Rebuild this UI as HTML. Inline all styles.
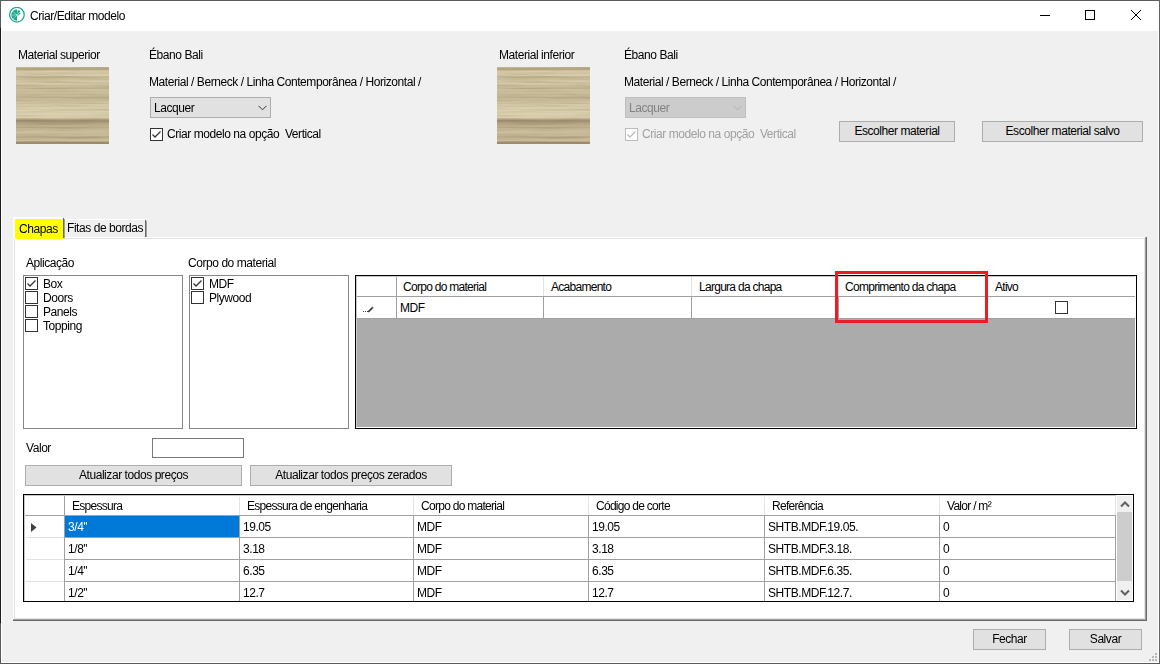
<!DOCTYPE html>
<html><head><meta charset="utf-8">
<style>
*{box-sizing:border-box;margin:0;padding:0}
html,body{width:1160px;height:664px;overflow:hidden;background:#f0f0f0;font-family:"Liberation Sans",sans-serif;font-size:11px;color:#000}
.a{position:absolute}
.t{position:absolute;white-space:nowrap;line-height:15px;font-size:12px;letter-spacing:-0.44px}
.btn{position:absolute;background:#e1e1e1;border:1px solid #adadad}
.btn span{position:absolute;left:0;right:0;text-align:center;white-space:nowrap;line-height:15px;font-size:12px;letter-spacing:-0.44px}
.cb{position:absolute;width:13px;height:13px;border:1px solid #333;background:#fff}
.cb svg{position:absolute;left:0;top:0}
.lb{position:absolute;border:1px solid #828790;background:#fff}
.hl{position:absolute;background:#a0a0a0;height:1px}
.vl{position:absolute;background:#a0a0a0;width:1px}
.hvl{position:absolute;background:#e3e3e3;width:1px}
.wood{position:absolute;width:93px;height:77px;background:repeating-linear-gradient(180deg,rgba(80,60,30,0.05) 0px,rgba(80,60,30,0) 1px,rgba(255,255,240,0.05) 2px,rgba(80,60,30,0) 3px),linear-gradient(180deg,#c9bd9a 0px,#c0b290 1px,#b3a37f 1.6px,#b8a985 2.6px,#cfc4a2 3.4px,#d8cdab 5px,#d6cba9 8.5px,#c8bc99 9.5px,#cbbf9c 12px,#cec3a1 13px,#d6cba9 16px,#cdc19e 18px,#c7bb98 19px,#cbbf9c 24px,#c3b693 30px,#c6b996 33px,#cdc19f 35px,#d3c8a6 38px,#dad0ae 44px,#d8ceac 51px,#b9a985 52.2px,#9e8e6b 53.2px,#a5957a 55px,#b0a07d 56px,#bbac89 58px,#c2b491 62px,#cbbf9d 64px,#c6b996 68px,#c2b492 69px,#b7a886 70.5px,#c4b795 72px,#cdc1a0 73px,#c4b694 74px,#a89977 75px,#9a8a69 76px,#9a8a69 77px)}
</style></head><body>
<!-- window frame -->
<div class="a" style="left:0;top:0;width:1160px;height:1px;background:#5a5a5a"></div>
<div class="a" style="left:0;top:0;width:1px;height:28px;background:#5a5a5a"></div>
<div class="a" style="left:0;top:28px;width:1px;height:595px;background:#1c1c1c"></div>
<div class="a" style="left:0;top:623px;width:1px;height:41px;background:#5a5a5a"></div>
<div class="a" style="left:1159px;top:0;width:1px;height:664px;background:#646464"></div>
<div class="a" style="left:0;top:663px;width:1160px;height:1px;background:#5a5a5a"></div>
<div class="a" style="left:1px;top:1px;width:1158px;height:30px;background:#fff"></div>
<div class="a" style="left:1px;top:31px;width:1px;height:632px;background:#fff"></div>
<div class="a" style="left:1158px;top:31px;width:1px;height:632px;background:#fff"></div>
<div class="a" style="left:1px;top:662px;width:1158px;height:1px;background:#fff"></div>

<!-- title bar -->
<svg class="a" style="left:9px;top:7px" width="16" height="16" viewBox="0 0 16 16">
<circle cx="7.9" cy="7.7" r="7.3" fill="none" stroke="#1fa88f" stroke-width="1.25"/>
<path d="M8 8 L8 2.3 A5.7 5.7 0 0 0 8 13.8 Z" fill="#1fa88f"/>
<path d="M8 8 L8.6 3.2 L10.6 3.6 L11.2 4.6 L10.5 5.6 L11.6 6.2 L10.8 7.4 L9.6 7.5 L9.3 9 Z" fill="#1fa88f"/>
<path d="M8 8 L3 4 M8 8 L2.2 8 M8 8 L3.5 12.3 M8 8 L10.8 5" stroke="#fff" stroke-width="0.45" fill="none"/>
</svg>
<div class="t" style="left:30px;top:9px;font-size:12px;line-height:14px">Criar/Editar modelo</div>
<div class="a" style="left:1040px;top:15px;width:10px;height:1px;background:#000"></div>
<div class="a" style="left:1085px;top:10px;width:10px;height:10px;border:1px solid #000"></div>
<svg class="a" style="left:1130px;top:9px" width="12" height="12" viewBox="0 0 12 12"><path d="M1 1 L11 11 M11 1 L1 11" stroke="#000" stroke-width="1"/></svg>


<!-- top section -->
<div class="t" style="left:18px;top:48px">Material superior</div>
<div class="wood" style="left:16px;top:67px"></div>
<svg class="a" style="left:16px;top:67px;mix-blend-mode:multiply;opacity:0.3" width="93" height="77"><filter id="wg1" x="0" y="0" width="100%" height="100%"><feTurbulence type="fractalNoise" baseFrequency="0.015 0.4" numOctaves="3" seed="4"/><feColorMatrix type="matrix" values="0 0 0 0 0.45  0 0 0 0 0.37  0 0 0 0 0.22  -2.2 0 0 0 1.25"/></filter><rect width="93" height="77" filter="url(#wg1)"/></svg>
<div class="t" style="left:149px;top:48px">Ébano Bali</div>
<div class="t" style="left:149px;top:75px">Material / Berneck / Linha Contemporânea / Horizontal /</div>
<div class="a" style="left:150px;top:97px;width:121px;height:21px;background:#e1e1e1;border:1px solid #adadad"></div>
<div class="t" style="left:154px;top:101px">Lacquer</div>
<svg class="a" style="left:258px;top:105px" width="9" height="6" viewBox="0 0 9 6"><path d="M0.5 0.8 L4.5 4.8 L8.5 0.8" fill="none" stroke="#333" stroke-width="1"/></svg>
<div class="cb" style="left:150px;top:128px"><svg width="11" height="11" viewBox="0 0 11 11"><path d="M1.5 5.5 L4 8 L9.5 2.5" fill="none" stroke="#333" stroke-width="1.3"/></svg></div>
<div class="t" style="left:167px;top:127px">Criar modelo na opção&nbsp; Vertical</div>

<div class="t" style="left:499px;top:48px">Material inferior</div>
<div class="wood" style="left:497px;top:67px"></div>
<svg class="a" style="left:497px;top:67px;mix-blend-mode:multiply;opacity:0.3" width="93" height="77"><filter id="wg2" x="0" y="0" width="100%" height="100%"><feTurbulence type="fractalNoise" baseFrequency="0.015 0.4" numOctaves="3" seed="4"/><feColorMatrix type="matrix" values="0 0 0 0 0.45  0 0 0 0 0.37  0 0 0 0 0.22  -2.2 0 0 0 1.25"/></filter><rect width="93" height="77" filter="url(#wg2)"/></svg>
<div class="t" style="left:624px;top:48px">Ébano Bali</div>
<div class="t" style="left:624px;top:75px">Material / Berneck / Linha Contemporânea / Horizontal /</div>
<div class="a" style="left:625px;top:97px;width:121px;height:21px;background:#cccccc;border:1px solid #bfbfbf"></div>
<div class="t" style="left:629px;top:101px;color:#838383">Lacquer</div>
<svg class="a" style="left:733px;top:105px" width="9" height="6" viewBox="0 0 9 6"><path d="M0.5 0.8 L4.5 4.8 L8.5 0.8" fill="none" stroke="#b0b0b0" stroke-width="1"/></svg>
<div class="cb" style="left:625px;top:128px;border-color:#bcbcbc"><svg width="11" height="11" viewBox="0 0 11 11"><path d="M1.5 5.5 L4 8 L9.5 2.5" fill="none" stroke="#bcbcbc" stroke-width="1.3"/></svg></div>
<div class="t" style="left:642px;top:127px;color:#a0a0a0">Criar modelo na opção&nbsp; Vertical</div>

<div class="btn" style="left:839px;top:121px;width:116px;height:21px"><span style="top:2px">Escolher material</span></div>
<div class="btn" style="left:982px;top:121px;width:161px;height:21px"><span style="top:2px">Escolher material salvo</span></div>


<!-- tab control -->
<div class="a" style="left:13px;top:237px;width:1134px;height:384px;background:#fff"></div>
<div class="a" style="left:14px;top:238px;width:1px;height:381px;background:#e3e3e3"></div>
<div class="a" style="left:14px;top:238px;width:1131px;height:1px;background:#e3e3e3"></div>
<div class="a" style="left:1144px;top:238px;width:1px;height:381px;background:#e3e3e3"></div>
<div class="a" style="left:1145px;top:237px;width:1px;height:383px;background:#a0a0a0"></div>
<div class="a" style="left:1146px;top:237px;width:1px;height:384px;background:#696969"></div>
<div class="a" style="left:14px;top:618px;width:1131px;height:1px;background:#e3e3e3"></div>
<div class="a" style="left:13px;top:619px;width:1133px;height:1px;background:#a0a0a0"></div>
<div class="a" style="left:13px;top:620px;width:1134px;height:1px;background:#696969"></div>
<!-- tab 2 -->
<div class="a" style="left:64px;top:219px;width:81px;height:18px;background:#f0f0f0;border-top:1px solid #fff"></div>
<div class="a" style="left:145px;top:220px;width:1px;height:17px;background:#696969"></div>
<div class="a" style="left:146px;top:221px;width:1px;height:16px;background:#a0a0a0"></div>
<div class="t" style="left:67px;top:221px">Fitas de bordas</div>
<!-- tab 1 selected -->
<div class="a" style="left:13px;top:217px;width:50px;height:22px;background:#fff"></div>
<div class="a" style="left:15px;top:219px;width:49px;height:20px;background:#ffff00"></div>
<div class="a" style="left:63px;top:218px;width:1px;height:20px;background:#696969"></div>
<div class="a" style="left:64px;top:219px;width:1px;height:19px;background:#a0a0a0"></div>
<div class="t" style="left:19px;top:222px">Chapas</div>

<!-- listboxes -->
<div class="t" style="left:26px;top:256px">Aplicação</div>
<div class="t" style="left:188px;top:256px">Corpo do material</div>
<div class="lb" style="left:23px;top:275px;width:160px;height:154px"></div>
<div class="lb" style="left:189px;top:275px;width:160px;height:154px"></div>
<div class="cb" style="left:25px;top:277px"><svg width="11" height="11" viewBox="0 0 11 11"><path d="M1.5 5.5 L4 8 L9.5 2.5" fill="none" stroke="#333" stroke-width="1.3"/></svg></div>
<div class="t" style="left:43px;top:277px">Box</div>
<div class="cb" style="left:25px;top:291px"></div>
<div class="t" style="left:43px;top:291px">Doors</div>
<div class="cb" style="left:25px;top:305px"></div>
<div class="t" style="left:43px;top:305px">Panels</div>
<div class="cb" style="left:25px;top:319px"></div>
<div class="t" style="left:43px;top:319px">Topping</div>
<div class="cb" style="left:191px;top:277px"><svg width="11" height="11" viewBox="0 0 11 11"><path d="M1.5 5.5 L4 8 L9.5 2.5" fill="none" stroke="#333" stroke-width="1.3"/></svg></div>
<div class="t" style="left:209px;top:277px">MDF</div>
<div class="cb" style="left:191px;top:291px"></div>
<div class="t" style="left:209px;top:291px">Plywood</div>


<!-- grid 1 -->
<div class="a" style="left:355px;top:275px;width:782px;height:154px;background:#ababab;border:1px solid #000"></div>
<div class="a" style="left:356px;top:276px;width:780px;height:42px;background:#fff"></div>
<div class="hl" style="left:356px;top:296px;width:780px"></div>
<div class="hl" style="left:356px;top:318px;width:780px"></div>
<div class="vl" style="left:396px;top:276px;height:42px"></div>
<div class="hvl" style="left:543px;top:277px;height:19px"></div>
<div class="hvl" style="left:691px;top:277px;height:19px"></div>
<div class="hvl" style="left:838px;top:277px;height:19px"></div>
<div class="hvl" style="left:987px;top:277px;height:19px"></div>
<div class="vl" style="left:543px;top:297px;height:21px"></div>
<div class="vl" style="left:691px;top:297px;height:21px"></div>
<div class="vl" style="left:838px;top:297px;height:21px"></div>
<div class="vl" style="left:987px;top:297px;height:21px"></div>
<div class="t" style="left:403px;top:280px;letter-spacing:-0.72px">Corpo do material</div>
<div class="t" style="left:551px;top:280px;letter-spacing:-0.72px">Acabamento</div>
<div class="t" style="left:699px;top:280px;letter-spacing:-0.72px">Largura da chapa</div>
<div class="t" style="left:845px;top:280px;letter-spacing:-0.72px">Comprimento da chapa</div>
<div class="t" style="left:995px;top:280px;letter-spacing:-0.72px">Ativo</div>
<div class="t" style="left:400px;top:301px">MDF</div>
<svg class="a" style="left:360px;top:304px" width="16" height="10" viewBox="0 0 16 10"><rect x="3" y="7" width="1" height="1" fill="#444"/><rect x="5" y="7" width="1" height="1" fill="#444"/><rect x="7" y="7" width="1" height="1" fill="#444"/><path d="M7.6 7.6 L11.4 3.4 L12.9 4.6 L8.8 8.4 Z" fill="#333"/><path d="M11.4 3.4 L12.3 2.5 L13.8 3.7 L12.9 4.6 Z" fill="#555"/></svg>
<div class="cb" style="left:1055px;top:301px"></div>
<div class="a" style="left:356px;top:276px;width:1px;height:152px;background:#c8c8c8"></div>
<div class="a" style="left:356px;top:276px;width:779px;height:1px;background:#c8c8c8"></div>
<div class="a" style="left:1135px;top:276px;width:1px;height:152px;background:#fff"></div>
<div class="a" style="left:356px;top:427px;width:780px;height:1px;background:#fff"></div>
<div class="a" style="left:835px;top:271px;width:153px;height:52px;border:3px solid #ed1c24"></div>

<!-- grid 2 -->
<div class="a" style="left:23px;top:494px;width:1111px;height:108px;background:#fff;border:1px solid #000"></div>
<div class="a" style="left:65px;top:516px;width:174px;height:21px;background:#0078d7"></div>
<div class="hl" style="left:24px;top:515px;width:1092px"></div>
<div class="hl" style="left:26px;top:537px;width:38px;background:#e3e3e3"></div>
<div class="hl" style="left:64px;top:537px;width:1052px"></div>
<div class="hl" style="left:26px;top:559px;width:38px;background:#e3e3e3"></div>
<div class="hl" style="left:64px;top:559px;width:1052px"></div>
<div class="hl" style="left:26px;top:581px;width:38px;background:#e3e3e3"></div>
<div class="hl" style="left:64px;top:581px;width:1052px"></div>
<div class="vl" style="left:64px;top:495px;height:106px"></div>
<div class="hvl" style="left:239px;top:497px;height:18px"></div>
<div class="vl" style="left:239px;top:516px;height:85px"></div>
<div class="hvl" style="left:413px;top:497px;height:18px"></div>
<div class="vl" style="left:413px;top:516px;height:85px"></div>
<div class="hvl" style="left:588px;top:497px;height:18px"></div>
<div class="vl" style="left:588px;top:516px;height:85px"></div>
<div class="hvl" style="left:764px;top:497px;height:18px"></div>
<div class="vl" style="left:764px;top:516px;height:85px"></div>
<div class="hvl" style="left:939px;top:497px;height:18px"></div>
<div class="vl" style="left:939px;top:516px;height:85px"></div>
<div class="hvl" style="left:1115px;top:497px;height:18px"></div>
<div class="vl" style="left:1115px;top:516px;height:85px"></div>
<div class="t" style="left:72px;top:499px;letter-spacing:-0.72px">Espessura</div>
<div class="t" style="left:247px;top:499px;letter-spacing:-0.72px">Espessura de engenharia</div>
<div class="t" style="left:421px;top:499px;letter-spacing:-0.72px">Corpo do material</div>
<div class="t" style="left:596px;top:499px;letter-spacing:-0.72px">Código de corte</div>
<div class="t" style="left:772px;top:499px;letter-spacing:-0.72px">Referência</div>
<div class="t" style="left:947px;top:499px;letter-spacing:-0.72px">Valor / m²</div>
<div class="t" style="left:68px;top:520px;color:#fff">3/4''</div>
<div class="t" style="left:243px;top:520px">19.05</div>
<div class="t" style="left:417px;top:520px">MDF</div>
<div class="t" style="left:592px;top:520px">19.05</div>
<div class="t" style="left:768px;top:520px">SHTB.MDF.19.05.</div>
<div class="t" style="left:943px;top:520px">0</div>
<div class="t" style="left:68px;top:542px">1/8''</div>
<div class="t" style="left:243px;top:542px">3.18</div>
<div class="t" style="left:417px;top:542px">MDF</div>
<div class="t" style="left:592px;top:542px">3.18</div>
<div class="t" style="left:768px;top:542px">SHTB.MDF.3.18.</div>
<div class="t" style="left:943px;top:542px">0</div>
<div class="t" style="left:68px;top:564px">1/4''</div>
<div class="t" style="left:243px;top:564px">6.35</div>
<div class="t" style="left:417px;top:564px">MDF</div>
<div class="t" style="left:592px;top:564px">6.35</div>
<div class="t" style="left:768px;top:564px">SHTB.MDF.6.35.</div>
<div class="t" style="left:943px;top:564px">0</div>
<div class="t" style="left:68px;top:586px">1/2''</div>
<div class="t" style="left:243px;top:586px">12.7</div>
<div class="t" style="left:417px;top:586px">MDF</div>
<div class="t" style="left:592px;top:586px">12.7</div>
<div class="t" style="left:768px;top:586px">SHTB.MDF.12.7.</div>
<div class="t" style="left:943px;top:586px">0</div>
<svg class="a" style="left:31px;top:523px" width="6" height="9" viewBox="0 0 6 9"><path d="M0 0 L5.5 4.5 L0 9 Z" fill="#404040"/></svg>
<div class="a" style="left:1116px;top:495px;width:17px;height:106px;background:#fff"></div><div class="a" style="left:1117px;top:496px;width:15px;height:104px;background:#f0f0f0"></div>
<div class="a" style="left:1117px;top:512px;width:15px;height:69px;background:#cdcdcd"></div>
<div class="a" style="left:24px;top:495px;width:1px;height:106px;background:#c8c8c8"></div>
<div class="a" style="left:24px;top:495px;width:1092px;height:1px;background:#c8c8c8"></div>
<svg class="a" style="left:1120px;top:500px" width="10" height="8" viewBox="0 0 10 8"><path d="M1 6.5 L5 2.5 L9 6.5" fill="none" stroke="#606060" stroke-width="2"/></svg>
<svg class="a" style="left:1120px;top:589px" width="10" height="8" viewBox="0 0 10 8"><path d="M1 1.5 L5 5.5 L9 1.5" fill="none" stroke="#606060" stroke-width="2"/></svg>
<div class="t" style="left:26px;top:441px">Valor</div>
<div class="a" style="left:152px;top:438px;width:92px;height:20px;background:#fff;border:1px solid #7a7a7a"></div>
<div class="btn" style="left:25px;top:465px;width:217px;height:21px"><span style="top:2px">Atualizar todos preços</span></div>
<div class="btn" style="left:250px;top:465px;width:202px;height:21px"><span style="top:2px">Atualizar todos preços zerados</span></div>
<div class="btn" style="left:973px;top:629px;width:73px;height:21px"><span style="top:2px">Fechar</span></div>
<div class="btn" style="left:1069px;top:629px;width:73px;height:21px"><span style="top:2px">Salvar</span></div>
<div class="a" style="left:1155px;top:653px;width:2px;height:2px;background:#b8b8b8"></div>
<div class="a" style="left:1152px;top:656px;width:2px;height:2px;background:#b8b8b8"></div>
<div class="a" style="left:1155px;top:656px;width:2px;height:2px;background:#b8b8b8"></div>
<div class="a" style="left:1149px;top:659px;width:2px;height:2px;background:#b8b8b8"></div>
<div class="a" style="left:1152px;top:659px;width:2px;height:2px;background:#b8b8b8"></div>
<div class="a" style="left:1155px;top:659px;width:2px;height:2px;background:#b8b8b8"></div>
</body></html>
